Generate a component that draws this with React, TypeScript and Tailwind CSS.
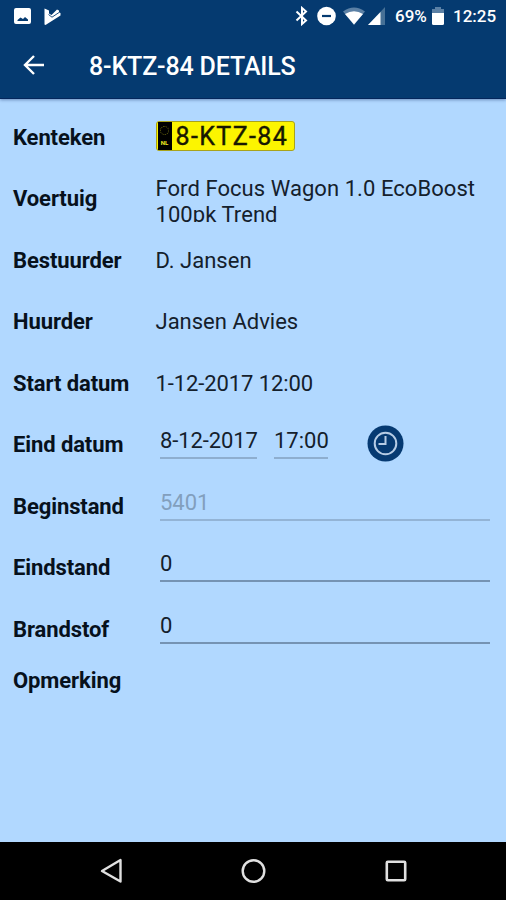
import React from 'react';

const StatusBar: React.FC = () => (
  <div className="flex h-8 items-center justify-between pl-[14px] pr-[9px] text-white">
    <div className="flex items-center gap-[13px]">
      <svg width="17" height="16" viewBox="0 0 17 16">
        <path fill="#fff" fillRule="evenodd" d="M2 0h13a2 2 0 0 1 2 2v12a2 2 0 0 1-2 2H2a2 2 0 0 1-2-2V2a2 2 0 0 1 2-2zM3.500 13h10.500v-1.500L11 9 9 11 6.500 9.500l-3 2.500z" />
      </svg>
      <svg width="17" height="17" viewBox="0 0 17 17">
        <path fill="#fff" d="M.5.500 5 2.500v3l2.500 1.500L13 1.500l2 1v2l1.500.5v2.500L1.500 17l-1-.5z" />
        <path fill="none" stroke="#053a70" strokeWidth=".9" d="m4.500 6.500 3.500 2.700L15 4.500" />
      </svg>
    </div>
    <div className="flex items-center text-[17px] font-medium leading-none">
      <svg width="14" height="20" viewBox="0 0 14 20" fill="none" stroke="#fff" strokeWidth="2">
        <path d="m1.500 5.500 9.500 9L7 18V2l4 3.500-9.500 9" />
      </svg>
      <svg className="-mt-px ml-[8px]" width="20" height="20" viewBox="0 0 20 20">
        <circle cx="9.500" cy="10" r="9.300" fill="#fff" />
        <path stroke="#053a70" strokeWidth="2.200" d="M5 10h9" />
      </svg>
      <svg className="ml-[6px]" width="22" height="18" viewBox="0 0 22 18">
        <path fill="#5b80a5" d="M0 4.500Q11-3.500 22 4.500L11 18z" />
        <path fill="#fff" d="M2 7Q11 1.500 20 7L11 17.500z" />
      </svg>
      <svg className="ml-[3px]" width="17" height="18" viewBox="0 0 17 18">
        <path fill="#467096" d="M17 0v18H0z" />
        <path fill="#fff" d="M12.500 5v13H0z" />
      </svg>
      <span className="ml-[10px] w-[32px] whitespace-nowrap">69%</span>
      <svg className="-mt-px ml-[5px]" width="12" height="18" viewBox="0 0 12 18">
        <path fill="#5b80a5" d="M3 0h6v2h3v4H0V2h3z" />
        <path fill="#fff" d="M0 6h12v10.500a1.500 1.500 0 0 1-1.500 1.500h-9A1.500 1.500 0 0 1 0 16.500z" />
      </svg>
      <span className="ml-[9px] w-[44px] whitespace-nowrap">12:25</span>
    </div>
  </div>
);

const LicensePlate: React.FC = () => (
  <div className="flex h-[30px] w-[139px] items-center rounded-[3px] border border-[#a9a31a] bg-[#fcf500] pl-px">
    <div className="flex h-[28px] w-[14px] flex-col items-center justify-between bg-black py-[4px]">
      <span className="h-[9px] w-[9px] rounded-full border border-dotted border-[#6d6a10]" />
      <span className="text-[6px] font-bold leading-none text-[#f5ee20]">NL</span>
    </div>
    <span className="ml-[4px] whitespace-nowrap pt-px text-[25px] leading-none tracking-[1.400px] text-[#181800] [-webkit-text-stroke:0.400px_#181800]">8-KTZ-84</span>
  </div>
);

const Field: React.FC<{ value: string; className?: string }> = ({ value, className = '' }) => (
  <div className={`-mt-[5px] h-[34px] border-b-2 pt-[1px] leading-[30px] ${className}`}>{value}</div>
);

const ClockButton: React.FC = () => (
  <button className="-mt-[3px] ml-[39px]">
    <svg width="37" height="37" viewBox="0 0 37 37" fill="none">
      <circle cx="18.500" cy="18.500" r="18" fill="#063a72" />
      <circle cx="18.500" cy="18.500" r="10.800" stroke="#b6cce5" strokeWidth="2" />
      <path stroke="#b6cce5" strokeWidth="2" d="M18.500 11v8h-7" />
    </svg>
  </button>
);

const App: React.FC = () => {
  const rows = [
    { label: 'Kenteken', content: <div className="-mt-[3px]"><LicensePlate /></div> },
    {
      label: 'Voertuig',
      content: (
        <div className="h-[46px] w-[335px] overflow-hidden whitespace-normal leading-[26px] tracking-[0.060px]">
          Ford Focus Wagon 1.0 EcoBoost <br />
          100pk Trend
        </div>
      )
    },
    { label: 'Bestuurder', content: 'D. Jansen' },
    { label: 'Huurder', content: 'Jansen Advies' },
    { label: 'Start datum', content: <span className="tracking-[-0.100px]">1-12-2017 12:00</span> },
    {
      label: 'Eind datum',
      content: (
        <div className="ml-[4.500px] flex items-center">
          <Field value="8-12-2017" className="w-[97px] border-[#8eaecf] tracking-[-0.100px]" />
          <Field value="17:00" className="ml-[17px] w-[54px] border-[#8eaecf]" />
          <ClockButton />
        </div>
      )
    },
    { label: 'Beginstand', content: <Field value="5401" className="ml-[4.500px] w-[330px] border-[#93b4d6] text-[#829fbd]" /> },
    { label: 'Eindstand', content: <Field value="0" className="ml-[4.500px] w-[330px] border-[#7593b3]" /> },
    { label: 'Brandstof', content: <Field value="0" className="ml-[4.500px] w-[330px] border-[#7593b3]" /> }
  ];

  return (
    <div className="flex h-[900px] w-[506px] flex-col overflow-hidden bg-[#b1d8ff] font-['Roboto',sans-serif]">
      <header className="h-[99px] shrink-0 border-b border-[#04265c] bg-[#053a70] shadow-[0_1px_3px_rgba(0,30,90,0.4)]">
        <StatusBar />
        <div className="flex h-[66px] items-center pl-[23px] text-white">
          <svg className="-mt-px" width="22" height="20" viewBox="0 0 22 20" fill="none" stroke="#fff" strokeWidth="2.400">
            <path d="M21 10H2.500M11 1l-9 9 9 9" />
          </svg>
          <h1 className="ml-[44px] whitespace-nowrap pt-[2px] text-[25px] font-medium leading-none tracking-[-0.150px]">8-KTZ-84 DETAILS</h1>
        </div>
      </header>

      <main className="flex-1 pt-[7.500px] text-[22px] text-[#14202c]">
        {rows.map((row) => (
          <div key={row.label} className="flex h-[61.500px] items-center pl-[13px]">
            <div className="w-[142.500px] shrink-0 whitespace-nowrap font-bold tracking-[-0.100px] text-[#07111c]">{row.label}</div>
            <div className="whitespace-nowrap">{row.content}</div>
          </div>
        ))}
        <div className="flex h-[41px] items-center pl-[13px] font-bold tracking-[-0.100px] text-[#07111c]">Opmerking</div>
      </main>

      <nav className="flex h-[58px] shrink-0 items-center bg-black">
        <svg className="ml-[100px]" width="23" height="26" viewBox="0 0 23 26" fill="none" stroke="#e0e0e0" strokeWidth="2.400" strokeLinejoin="round">
          <path d="M20.500 2v21.500L2 13z" />
        </svg>
        <svg className="ml-[118px]" width="26" height="26" viewBox="0 0 26 26" fill="none" stroke="#e0e0e0" strokeWidth="2.400">
          <circle cx="12.500" cy="13" r="10.800" />
        </svg>
        <svg className="ml-[118px]" width="22" height="22" viewBox="0 0 22 22" fill="none" stroke="#e0e0e0" strokeWidth="2.600">
          <rect x="1.800" y="1.800" width="18.400" height="18.400" rx="1" />
        </svg>
      </nav>
    </div>
  );
};

export default App;
